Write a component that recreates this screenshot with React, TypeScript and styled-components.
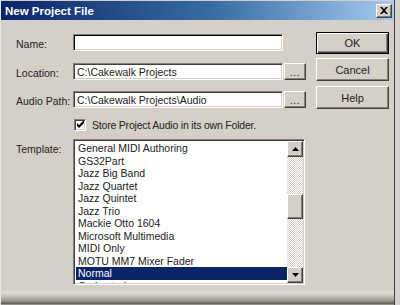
import { createGlobalStyle } from 'styled-components';
import styled from 'styled-components';

const GlobalStyle = createGlobalStyle`
  html, body {
    margin: 0;
    padding: 0;
    background: #d6d3ce;
  }
  body {
    font-family: "Liberation Sans", Arial, sans-serif;
    font-size: 10.5px;
    color: #222;
  }
`;

const templates = [
  'General MIDI Authoring',
  'GS32Part',
  'Jazz Big Band',
  'Jazz Quartet',
  'Jazz Quintet',
  'Jazz Trio',
  'Mackie Otto 1604',
  'Microsoft Multimedia',
  'MIDI Only',
  'MOTU MM7 Mixer Fader',
  'Normal',
  'Orchestral',
];

const sunken = `
  border-style: solid;
  border-width: 1px;
  border-color: #808080 #ffffff #ffffff #808080;
  box-shadow: inset 1px 1px 0 #404040, inset -1px -1px 0 #d4d0c8;
`;

const raised = `
  border-style: solid;
  border-width: 1px;
  border-color: #ffffff #404040 #404040 #ffffff;
  box-shadow: inset -1px -1px 0 #808080;
`;

export default () => {
  return (
    <>
      <GlobalStyle />
      <Window>
        <TitleBar>
          <Title>New Project File</Title>
          <CloseButton>
            <svg width="8" height="7" viewBox="0 0 8 7">
              <path d="M0 0h2l2 2 2-2h2L5 3.5 8 7H6L4 5 2 7H0l3-3.5z" fill="#000" />
            </svg>
          </CloseButton>
        </TitleBar>
        <Body>
          <Form>
            <Row $top={2}>
              <Label>Name:</Label>
              <TextField $focused />
            </Row>
            <Row $top={12}>
              <Label>Location:</Label>
              <TextField>C:\Cakewalk Projects</TextField>
              <Browse>...</Browse>
            </Row>
            <Row $top={11}>
              <Label>Audio Path:</Label>
              <TextField>C:\Cakewalk Projects\Audio</TextField>
              <Browse>...</Browse>
            </Row>
            <CheckRow>
              <CheckBox>
                <svg width="7" height="7" viewBox="0 0 7 7">
                  <path d="M0 2v3l2 2 5-5V-1L2 4z" fill="#000" />
                </svg>
              </CheckBox>
              <CheckText>Store Project Audio in its own Folder.</CheckText>
            </CheckRow>
            <TemplateRow>
              <TemplateLabel>Template:</TemplateLabel>
              <ListBox>
                <Items>
                  {templates.map((t) => (
                    <Item key={t} $selected={t === 'Normal'}>
                      {t}
                    </Item>
                  ))}
                </Items>
                <ScrollBar>
                  <ArrowButton>
                    <svg width="7" height="4" viewBox="0 0 7 4">
                      <path d="M3.5 0L7 4H0z" fill="#000" />
                    </svg>
                  </ArrowButton>
                  <Track>
                    <Thumb />
                  </Track>
                  <ArrowButton>
                    <svg width="7" height="4" viewBox="0 0 7 4">
                      <path d="M0 0h7L3.5 4z" fill="#000" />
                    </svg>
                  </ArrowButton>
                </ScrollBar>
              </ListBox>
            </TemplateRow>
          </Form>
          <Buttons>
            <PushButton $default>OK</PushButton>
            <PushButton>Cancel</PushButton>
            <PushButton $top={1}>Help</PushButton>
          </Buttons>
        </Body>
        <Footer />
      </Window>
    </>
  );
};

const Window = styled.div`
  width: 395px;
  height: 305px;
  display: flex;
  flex-direction: column;
  background: #d4d0c8;
  border-left: 1px solid #e8e6e2;
  border-right: 1px solid #404040;
  box-sizing: border-box;
  overflow: hidden;
`;

const TitleBar = styled.div`
  height: 19px;
  margin-top: 1px;
  display: flex;
  align-items: center;
  justify-content: space-between;
  padding: 0 2px 0 4px;
  background: linear-gradient(to right, #0a246a 0%, #3a6ea5 55%, #a6caf0 100%);
`;

const Title = styled.span`
  color: #fff;
  font-weight: bold;
  font-size: 11.5px;
`;

const CloseButton = styled.div`
  width: 14px;
  height: 12px;
  display: flex;
  align-items: center;
  justify-content: center;
  background: #d4d0c8;
  ${raised}
`;

const Body = styled.div`
  flex: 1;
  display: flex;
  padding: 12px 0 0 15px;
`;

const Form = styled.div`
  display: flex;
  flex-direction: column;
  width: 290px;
`;

const Row = styled.div<{ $top: number }>`
  display: flex;
  align-items: center;
  margin-top: ${(p) => p.$top}px;
  height: 17px;
`;

const Label = styled.span`
  width: 57px;
  flex: none;
  padding-top: 2px;
`;

const TextField = styled.div<{ $focused?: boolean }>`
  width: 210px;
  height: 17px;
  box-sizing: border-box;
  background: #fff;
  ${sunken}
  ${(p) => (p.$focused ? 'box-shadow: inset 1px 1px 0 #000, inset -1px -1px 0 #d4d0c8;' : '')}
  padding: 2px 0 0 3px;
  white-space: nowrap;
  overflow: hidden;
`;

const Browse = styled.div`
  width: 22px;
  height: 17px;
  margin-left: 1px;
  box-sizing: border-box;
  ${raised}
  display: flex;
  align-items: flex-end;
  justify-content: center;
  padding-bottom: 3px;
  font-size: 10px;
  line-height: 6px;
  letter-spacing: 0.5px;
`;

const CheckRow = styled.div`
  display: flex;
  align-items: center;
  margin: 10px 0 0 58px;
  height: 13px;
  gap: 6px;
`;

const CheckText = styled.span`
  letter-spacing: -0.2px;
`;

const CheckBox = styled.div`
  width: 12px;
  height: 12px;
  box-sizing: border-box;
  background: #fff;
  ${sunken}
  display: flex;
  align-items: center;
  justify-content: center;
`;

const TemplateRow = styled.div`
  display: flex;
  margin-top: 8px;
`;

const TemplateLabel = styled.span`
  width: 57px;
  flex: none;
  padding-top: 4px;
`;

const ListBox = styled.div`
  width: 232px;
  height: 146px;
  box-sizing: border-box;
  background: #fff;
  ${sunken}
  display: flex;
  padding: 1px;
`;

const Items = styled.div`
  flex: 1;
  overflow: hidden;
  padding-top: 1px;
  padding-left: 1px;
`;

const Item = styled.div<{ $selected?: boolean }>`
  height: 12.5px;
  line-height: 13px;
  padding-left: 2px;
  white-space: nowrap;
  color: ${(p) => (p.$selected ? '#fff' : '#222')};
  background: ${(p) => (p.$selected ? '#0a246a' : 'transparent')};
`;

const ScrollBar = styled.div`
  width: 16px;
  display: flex;
  flex-direction: column;
`;

const ArrowButton = styled.div`
  height: 16px;
  box-sizing: border-box;
  background: #d4d0c8;
  ${raised}
  display: flex;
  align-items: center;
  justify-content: center;
`;

const Track = styled.div`
  flex: 1;
  background-color: #fff;
  background-image: repeating-conic-gradient(#d4d0c8 0 25%, #fff 0 50%);
  background-size: 2px 2px;
  padding-top: 37px;
`;

const Thumb = styled.div`
  height: 25px;
  box-sizing: border-box;
  background: #d4d0c8;
  ${raised}
`;

const Buttons = styled.div`
  display: flex;
  flex-direction: column;
  gap: 4px;
  margin-left: 10px;
`;

const PushButton = styled.div<{ $default?: boolean; $top?: number }>`
  width: 73px;
  height: ${(p) => (p.$default ? 22 : 23)}px;
  margin-top: ${(p) => p.$top || 0}px;
  box-sizing: border-box;
  display: flex;
  align-items: center;
  justify-content: center;
  font-size: 11px;
  background: #d4d0c8;
  border: 1px solid;
  border-color: ${(p) => (p.$default ? '#000' : '#fff #404040 #404040 #fff')};
  box-shadow: ${(p) =>
    p.$default
      ? 'inset 1px 1px 0 #fff, inset -1px -1px 0 #404040, inset -2px -2px 0 #808080'
      : 'inset -1px -1px 0 #808080'};
`;

const Footer = styled.div`
  height: 15px;
  background: linear-gradient(to bottom, #d4d0c8 0px, #e2dfda 2px, #b8b4ac 8px, #8c8880 12px, #5a5750 13px, #a8a49c 15px);
`;
